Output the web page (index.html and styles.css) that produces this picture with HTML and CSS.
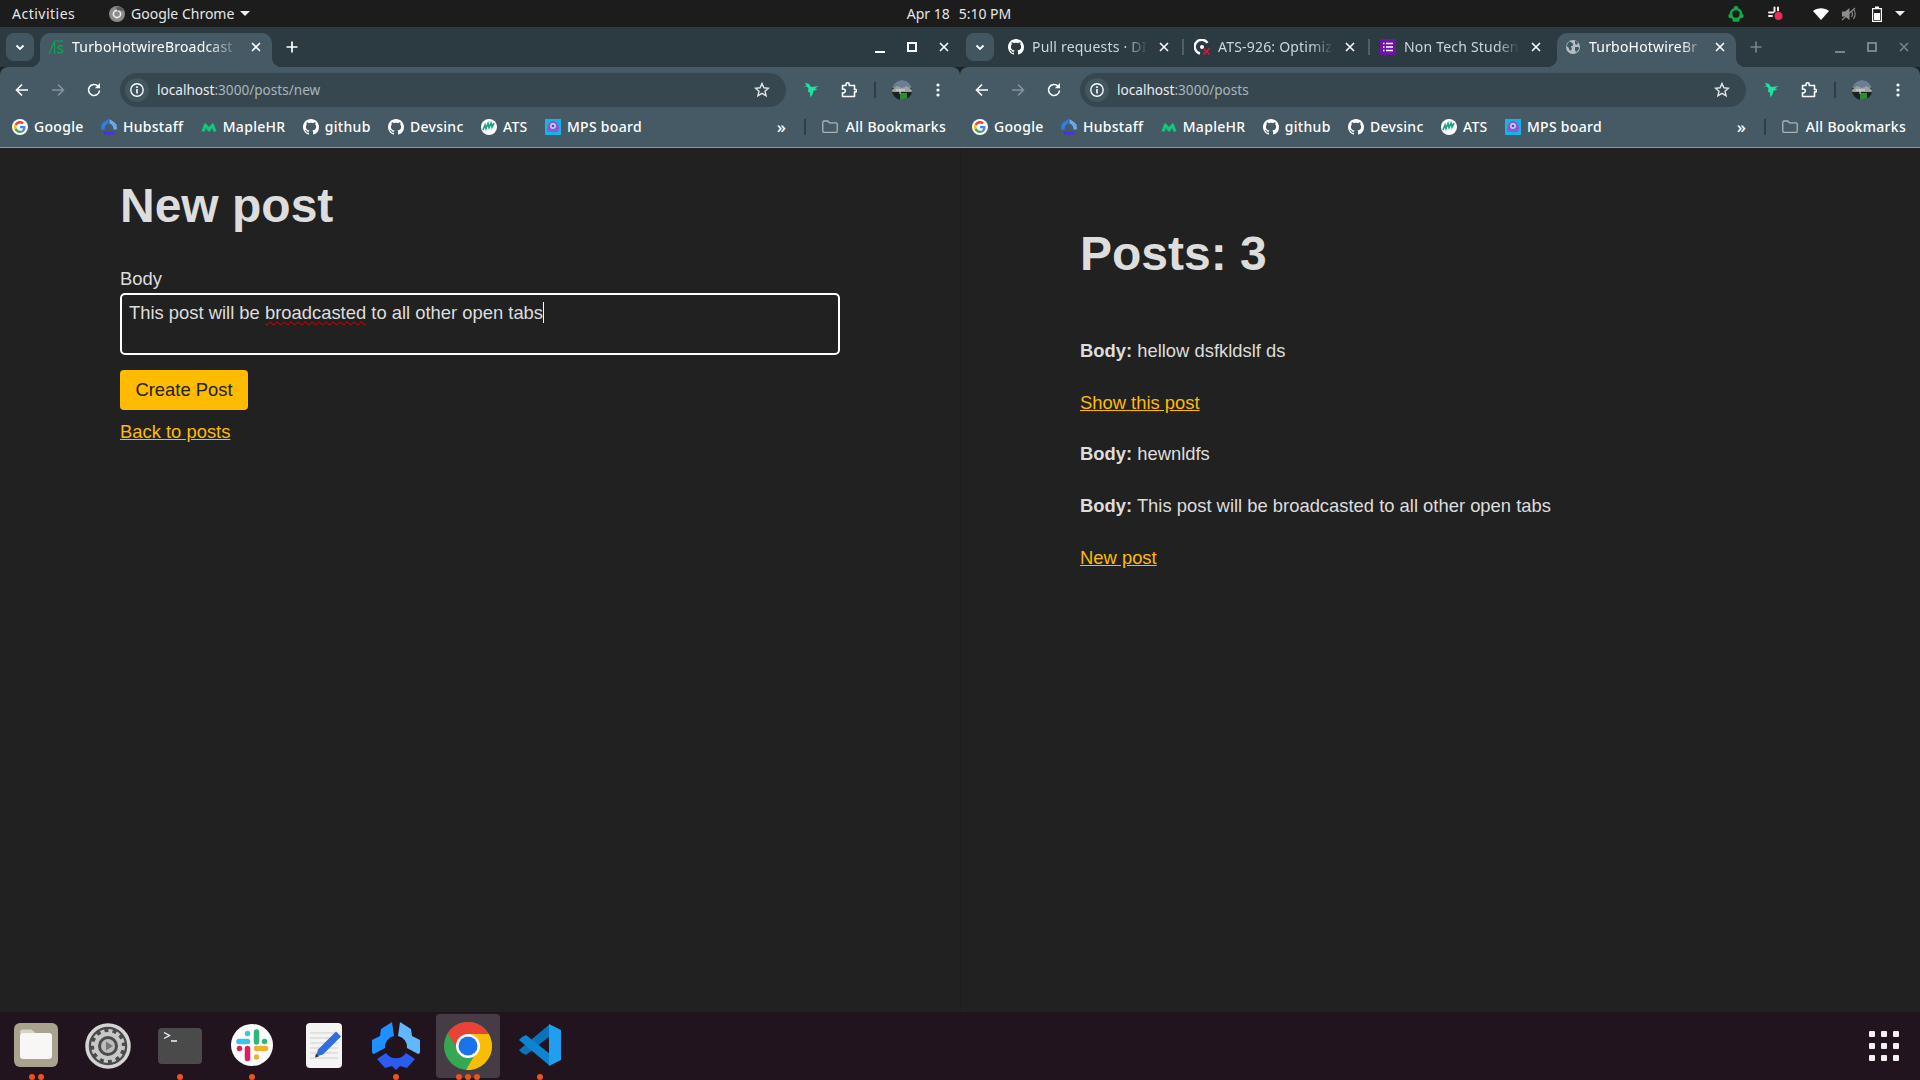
FILE: index.html
```html
<!DOCTYPE html>
<html lang="en">
<head>
<meta charset="utf-8">
<title>TurboHotwireBroadcast</title>
<link rel="stylesheet" href="styles.css">
</head>
<body>
<svg class="sprite" aria-hidden="true">
  <defs>
    <symbol id="gh" viewBox="0 0 16 16"><path fill="#fff" d="M8 0C3.58 0 0 3.58 0 8c0 3.54 2.29 6.53 5.47 7.59.4.07.55-.17.55-.38 0-.19-.01-.82-.01-1.49-2.01.37-2.53-.49-2.69-.94-.09-.23-.48-.94-.82-1.13-.28-.15-.68-.52-.01-.53.63-.01 1.08.58 1.23.82.72 1.21 1.87.87 2.33.66.07-.52.28-.87.51-1.07-1.78-.2-3.64-.89-3.64-3.95 0-.87.31-1.59.82-2.15-.08-.2-.36-1.02.08-2.12 0 0 .67-.21 2.2.82.64-.18 1.32-.27 2-.27.68 0 1.36.09 2 .27 1.53-1.04 2.2-.82 2.2-.82.44 1.1.16 1.92.08 2.12.51.56.82 1.27.82 2.15 0 3.07-1.87 3.75-3.65 3.95.29.25.54.73.54 1.48 0 1.07-.01 1.93-.01 2.2 0 .21.15.46.55.38A8.013 8.013 0 0016 8c0-4.42-3.58-8-8-8z"/></symbol>
    <symbol id="google" viewBox="0 0 48 48"><circle cx="24" cy="24" r="24" fill="#fff"/><g transform="translate(6 6) scale(.75)"><path fill="#EA4335" d="M24 9.5c3.5 0 6.7 1.2 9.2 3.6l6.9-6.9C35.9 2.4 30.5 0 24 0 14.6 0 6.5 5.4 2.6 13.2l8 6.2C12.4 13.7 17.7 9.5 24 9.5z"/><path fill="#4285F4" d="M46.1 24.5c0-1.6-.1-3.1-.4-4.5H24v9h12.4c-.5 2.9-2.2 5.4-4.6 7l7.3 5.7c4.3-4 7-9.9 7-17.2z"/><path fill="#FBBC05" d="M10.5 28.6c-.5-1.4-.8-3-.8-4.6s.3-3.2.8-4.6l-8-6.2C.9 16.5 0 20.1 0 24s.9 7.5 2.6 10.8l7.9-6.2z"/><path fill="#34A853" d="M24 48c6.5 0 11.9-2.1 15.9-5.8l-7.3-5.7c-2.2 1.5-5 2.3-8.6 2.3-6.3 0-11.6-4.2-13.5-9.9l-8 6.2C6.5 42.6 14.6 48 24 48z"/></g></symbol>
    <symbol id="hubstaff" viewBox="0 0 16 16"><path fill="#2f7de8" d="M7.500 0 3 3 .5 5.500 0 10.500h3.500C3.500 7 5 5 7.500 4.500z"/><path fill="#6aa8f2" d="M8.500 0 13 3l2.500 2.500.5 5h-3.500C12.500 7 11 5 8.500 4.500z"/><path fill="#4a2ff0" d="M1.500 12.500h13L12 15.500l-2-.5-2 1-2-1-2 .5z"/></symbol>
    <symbol id="maple" viewBox="0 0 16 16"><path fill="#12c87e" d="M.5 12.500 3 5.500c.4-1 1.600-1.200 2.300-.4L8 8l2.700-2.900c.7-.8 1.900-.6 2.300.4l2.500 7h-3.200L11 9l-2 3.500H7L5 9l-1.300 3.500z"/></symbol>
    <symbol id="ats" viewBox="0 0 16 16"><circle cx="8" cy="8" r="8" fill="#fff"/><path fill="none" stroke="#17a589" stroke-width="1.700" d="M2 11l2-5 1 3.500 2-5 1 4 2-4.500 1 4 2-4"/></symbol>
    <symbol id="mps" viewBox="0 0 16 16"><rect width="16" height="16" fill="#12b5e5"/><path fill="#8e56d8" d="M2 9.500C2 5 4.500 2 8 2s6 3 6 7.500c0 2-1 3.500-2.500 3.500h-7C3 13 2 11.500 2 9.500z"/><circle cx="8" cy="7" r="3" fill="#b7d5f5"/><circle cx="8" cy="7" r="1.300" fill="#6a3fc0"/></symbol>
    <symbol id="folder" viewBox="0 0 16 16"><path fill="none" stroke="#a9b3b8" stroke-width="1.300" d="M.8 3.200c0-.7.5-1.200 1.200-1.200h3.700l1.600 1.800H14c.7 0 1.200.5 1.200 1.200v7.200c0 .7-.5 1.200-1.200 1.200H2c-.7 0-1.200-.5-1.200-1.200z"/></symbol>
    <symbol id="close" viewBox="0 0 16 16"><path fill="none" stroke="currentColor" stroke-width="1.600" d="M4 4l8 8M12 4l-8 8"/></symbol>
    <symbol id="chev" viewBox="0 0 16 16"><path fill="none" stroke="#fff" stroke-width="1.800" d="M4.500 6.500 8 10l3.500-3.500"/></symbol>
    <symbol id="plus" viewBox="0 0 16 16"><path fill="none" stroke="currentColor" stroke-width="1.700" d="M8 2.500v11M2.500 8h11"/></symbol>
    <symbol id="back" viewBox="0 0 16 16"><path fill="none" stroke="currentColor" stroke-width="1.600" d="M14 8H2.500M8 2.500 2.500 8 8 13.500"/></symbol>
    <symbol id="fwd" viewBox="0 0 16 16"><path fill="none" stroke="currentColor" stroke-width="1.600" d="M2 8h11.500M8 2.500 13.500 8 8 13.500"/></symbol>
    <symbol id="reload" viewBox="0 0 16 16"><path fill="none" stroke="#fff" stroke-width="1.600" d="M13.500 8.500A5.500 5.500 0 1 1 12 4.200"/><path fill="#fff" d="M14 1v5.200H8.800z"/></symbol>
    <symbol id="info" viewBox="0 0 16 16"><circle cx="8" cy="8" r="6.200" fill="none" stroke="#fff" stroke-width="1.400"/><path fill="#fff" d="M7.200 7h1.600v4.500H7.200zM7.200 4.300h1.600v1.600H7.200z"/></symbol>
    <symbol id="star" viewBox="0 0 16 16"><path fill="none" stroke="#dfe5e8" stroke-width="1.400" d="M8 1.500l1.900 4.300 4.600.4-3.500 3 1.100 4.600L8 11.400l-4.100 2.400L5 9.200l-3.500-3 4.600-.4z"/></symbol>
    <symbol id="ext" viewBox="0 0 16 16"><path fill="#17e7a4" d="M2 .5 6 2l1.500 2.500 1.500.5L15.500 4l-3.500 2.500L14.500 7.500l-4 1.200-.8 3.500L7 15.500 7.200 11 5 9.500 5.500 6 3.500 4.500 .5 4.500 3.500 3.500z"/></symbol>
    <symbol id="puzzle" viewBox="0 0 16 16"><path fill="none" stroke="#fff" stroke-width="1.600" stroke-linejoin="round" d="M1.500 3.500H5V2.300C5 1 6 .8 6.600.8S8.200 1 8.200 2.300v1.200h5.300v4h1.200c.6 0 .8.600.8 1.200s-.2 1.200-.8 1.200h-1.200v4.600H1.500v-3.800c2 .3 2.800-.5 2.800-1.900S3.500 6.800 1.500 7.100z"/></symbol>
    <symbol id="avatar" viewBox="0 0 20 20"><clipPath id="avclip"><circle cx="10" cy="10" r="10"/></clipPath><g clip-path="url(#avclip)"><rect width="20" height="20" fill="#2a3232"/><rect width="20" height="8" fill="#6d7d95"/><path fill="#9aa39a" d="M0 10 5 6l5 2 5-2 5 4v2H0z"/><path fill="#1b2120" d="M0 12h20v8H0z"/><rect x="8" y="13" width="7" height="7" fill="#2e8a3a"/><path stroke="#ddd" stroke-width="1" d="M4 10h9M8 10v4"/></g></symbol>
    <symbol id="dots" viewBox="0 0 16 16"><circle cx="8" cy="3" r="1.600" fill="#fff"/><circle cx="8" cy="8" r="1.600" fill="#fff"/><circle cx="8" cy="13" r="1.600" fill="#fff"/></symbol>
    <symbol id="globe" viewBox="0 0 16 16"><circle cx="8" cy="8" r="7" fill="#b4bec3"/><path fill="#42565f" d="M4 2.500l3 1 1.500 2.500L6 7.500 7 10 5 12 3.500 8.500 1.500 7zM10 1.500l3 2L12 6l-2-1zM10 8l3.500 0 .5 2-3 3.500-1-3z"/></symbol>
    <symbol id="rs" viewBox="0 0 16 16"><path fill="none" stroke="#12a150" stroke-width="1.200" d="M6.500 2H15M6.500 2 1 15M6.500 2v13"/><path fill="none" stroke="#12a150" stroke-width="1.400" d="M14.500 7.500c-1-1-4.500-1.300-4.500.8 0 2.400 4.800 1.400 4.800 3.800 0 2.300-3.800 2.200-5.300 1"/></symbol>
    <symbol id="ci" viewBox="0 0 16 16"><path fill="none" stroke="#fff" stroke-width="2.400" d="M13.500 3.800A7 7 0 1 0 6 14.500"/><circle cx="8" cy="8" r="2" fill="#fff"/><path fill="none" stroke="#e0143c" stroke-width="1.500" d="M9.500 9.500l6 6M15.500 9.500l-6 6"/></symbol>
    <symbol id="forms" viewBox="0 0 16 16"><rect width="16" height="16" rx="1" fill="#7014a8"/><path stroke="#fff" stroke-width="1.500" d="M3 4.500h1.500M6 4.500h7M3 8h1.500M6 8h7M3 11.500h1.500M6 11.500h7"/></symbol>
  </defs>
</svg>

<div class="desktop">
  <header class="topbar">
    <div class="top-left">
      <span class="activities">Activities</span>
      <span class="appmenu">
        <svg class="ic-16" viewBox="0 0 16 16"><circle cx="8" cy="8" r="8" fill="#8b8b8b"/><circle cx="8" cy="8" r="3.600" fill="none" stroke="#ededed" stroke-width="1.600"/><path fill="#5d5d5d" d="M8 4.400h7l-.6-1.600L11 .8 7 1.500z"/></svg>
        <span>Google Chrome</span>
        <i class="caret"></i>
      </span>
    </div>
    <div class="clock"><span>Apr 18</span><span>5:10 PM</span></div>
    <div class="tray">
      <svg class="ic-16 t-green" viewBox="0 0 16 16"><circle cx="8" cy="8" r="5" fill="none" stroke="#12a84a" stroke-width="2.600"/><g fill="#12a84a"><circle cx="8" cy="2" r="2.200"/><circle cx="2.500" cy="10" r="2.200"/><circle cx="13.500" cy="10" r="2.200"/><rect x="4.500" y="12.800" width="7" height="3" rx="1.400"/></g></svg>
      <svg class="ic-16 t-slack" viewBox="0 0 16 16"><path stroke="#eee" stroke-width="2" stroke-linecap="round" d="M1 6.500h4M6.500 1.500v4M1 10h3M10 1.500v3"/><circle cx="10.500" cy="10" r="4" fill="#f2295f"/></svg>
      <svg class="ic-16 t-wifi" viewBox="0 0 16 16"><path fill="#fff" d="M8 14 0 5c4.500-3.800 11.500-3.800 16 0z"/></svg>
      <svg class="ic-16 t-mute" viewBox="0 0 16 16"><path fill="#8d8d8d" d="M1 5.500h3L8.500 2v12L4 10.500H1z"/><path fill="none" stroke="#8d8d8d" stroke-width="1.100" d="M10.500 5c1.200 1.800 1.200 4.200 0 6M12.500 3c2 3 2 7 0 10M1 14 14 2"/></svg>
      <svg class="ic-16 t-batt" viewBox="0 0 16 16"><path fill="none" stroke="#fff" stroke-width="1.200" d="M3.600 2.600h8.800v12.800H3.600z"/><path fill="#fff" d="M6 .5h4v2H6zM5 7h6v7H5z"/></svg>
      <i class="caret t-caret"></i>
    </div>
  </header>

  <main class="windows">
    <section class="window">
      <div class="tabstrip">
        <button class="tab-list"><svg class="ic-16"><use href="#chev"/></svg></button>
        <div class="tab tab-active tab-wide">
          <svg class="ic-16"><use href="#rs"/></svg>
          <span class="tab-title">TurboHotwireBroadcast</span>
          <svg class="tab-x"><use href="#close"/></svg>
        </div>
        <button class="newtab"><svg class="ic-16"><use href="#plus"/></svg></button>
        <div class="winctl">
          <span class="ctl"><i class="ctl-min"></i></span>
          <span class="ctl"><i class="ctl-max"></i></span>
          <span class="ctl"><svg class="ic-16"><use href="#close"/></svg></span>
        </div>
      </div>
      <div class="toolbar">
        <span class="nav"><svg class="ic-16"><use href="#back"/></svg></span>
        <span class="nav nav-off"><svg class="ic-16"><use href="#fwd"/></svg></span>
        <span class="nav"><svg class="ic-16"><use href="#reload"/></svg></span>
        <div class="omnibox">
          <span class="chip"><svg class="ic-16"><use href="#info"/></svg></span>
          <span class="url">localhost<span class="url-dim">:3000/posts/new</span></span>
          <svg class="ic-16 star"><use href="#star"/></svg>
        </div>
        <div class="tools">
          <svg class="ic-16 tool-ext"><use href="#ext"/></svg>
          <svg class="ic-16 tool-puzzle"><use href="#puzzle"/></svg>
          <i class="vsep tool-sep"></i>
          <svg class="tool-avatar"><use href="#avatar"/></svg>
          <svg class="ic-16 tool-dots"><use href="#dots"/></svg>
        </div>
      </div>
      <nav class="bookmarks">
        <a class="bm"><svg class="ic-16"><use href="#google"/></svg>Google</a>
        <a class="bm"><svg class="ic-16"><use href="#hubstaff"/></svg>Hubstaff</a>
        <a class="bm"><svg class="ic-16"><use href="#maple"/></svg>MapleHR</a>
        <a class="bm"><svg class="ic-16"><use href="#gh"/></svg>github</a>
        <a class="bm"><svg class="ic-16"><use href="#gh"/></svg>Devsinc</a>
        <a class="bm"><svg class="ic-16"><use href="#ats"/></svg>ATS</a>
        <a class="bm"><svg class="ic-16"><use href="#mps"/></svg>MPS board</a>
        <span class="more">»</span>
        <i class="vsep"></i>
        <a class="bm bm-all"><svg class="ic-16"><use href="#folder"/></svg>All Bookmarks</a>
      </nav>
      <div class="page page-new">
        <h1>New post</h1>
        <form class="form">
          <label class="label">Body</label>
          <div class="textarea">This post will be <span class="misspelt">broadcasted</span> to all other open tabs<i class="text-caret"></i></div>
          <span class="btn">Create Post</span>
        </form>
        <a class="link back-link" href="#">Back to posts</a>
      </div>
    </section>

    <section class="window window-right">
      <div class="tabstrip">
        <button class="tab-list"><svg class="ic-16"><use href="#chev"/></svg></button>
        <div class="tab tab-sep">
          <svg class="ic-16"><use href="#gh"/></svg>
          <span class="tab-title">Pull requests · DI</span>
          <svg class="tab-x"><use href="#close"/></svg>
        </div>
        <div class="tab tab-sep">
          <svg class="ic-16"><use href="#ci"/></svg>
          <span class="tab-title">ATS-926: Optimiz</span>
          <svg class="tab-x"><use href="#close"/></svg>
        </div>
        <div class="tab">
          <svg class="ic-16"><use href="#forms"/></svg>
          <span class="tab-title">Non Tech Studen</span>
          <svg class="tab-x"><use href="#close"/></svg>
        </div>
        <div class="tab tab-active tab-last">
          <svg class="ic-16"><use href="#globe"/></svg>
          <span class="tab-title">TurboHotwireBr</span>
          <svg class="tab-x"><use href="#close"/></svg>
        </div>
        <button class="newtab newtab-dim"><svg class="ic-16"><use href="#plus"/></svg></button>
        <div class="winctl winctl-dim">
          <span class="ctl"><i class="ctl-min"></i></span>
          <span class="ctl"><i class="ctl-max"></i></span>
          <span class="ctl"><svg class="ic-16"><use href="#close"/></svg></span>
        </div>
      </div>
      <div class="toolbar">
        <span class="nav"><svg class="ic-16"><use href="#back"/></svg></span>
        <span class="nav nav-off"><svg class="ic-16"><use href="#fwd"/></svg></span>
        <span class="nav"><svg class="ic-16"><use href="#reload"/></svg></span>
        <div class="omnibox">
          <span class="chip"><svg class="ic-16"><use href="#info"/></svg></span>
          <span class="url">localhost<span class="url-dim">:3000/posts</span></span>
          <svg class="ic-16 star"><use href="#star"/></svg>
        </div>
        <div class="tools">
          <svg class="ic-16 tool-ext"><use href="#ext"/></svg>
          <svg class="ic-16 tool-puzzle"><use href="#puzzle"/></svg>
          <i class="vsep tool-sep"></i>
          <svg class="tool-avatar"><use href="#avatar"/></svg>
          <svg class="ic-16 tool-dots"><use href="#dots"/></svg>
        </div>
      </div>
      <nav class="bookmarks">
        <a class="bm"><svg class="ic-16"><use href="#google"/></svg>Google</a>
        <a class="bm"><svg class="ic-16"><use href="#hubstaff"/></svg>Hubstaff</a>
        <a class="bm"><svg class="ic-16"><use href="#maple"/></svg>MapleHR</a>
        <a class="bm"><svg class="ic-16"><use href="#gh"/></svg>github</a>
        <a class="bm"><svg class="ic-16"><use href="#gh"/></svg>Devsinc</a>
        <a class="bm"><svg class="ic-16"><use href="#ats"/></svg>ATS</a>
        <a class="bm"><svg class="ic-16"><use href="#mps"/></svg>MPS board</a>
        <span class="more">»</span>
        <i class="vsep"></i>
        <a class="bm bm-all"><svg class="ic-16"><use href="#folder"/></svg>All Bookmarks</a>
      </nav>
      <div class="page page-list">
        <h1>Posts: 3</h1>
        <div class="posts">
          <p><strong>Body:</strong> hellow dsfkldslf ds</p>
          <p><a class="link" href="#">Show this post</a></p>
          <p><strong>Body:</strong> hewnldfs</p>
          <p><strong>Body:</strong> This post will be broadcasted to all other open tabs</p>
          <p><a class="link" href="#">New post</a></p>
        </div>
      </div>
    </section>
  </main>

  <footer class="dock">
    <div class="apps">
      <div class="app">
        <svg class="appicon icon-files" viewBox="0 0 48 48"><rect x="2" y="1" width="44" height="44" rx="6" fill="#a8a28f"/><path fill="#d6d2c6" d="M8 10c0-1.500 1-2.500 2.500-2.500h9L24 11.500H8z"/><rect x="8" y="11" width="32" height="26" rx="3" fill="#f8f7f5"/></svg>
        <div class="run"><i></i><i></i></div>
      </div>
      <div class="app">
        <svg class="appicon" viewBox="0 0 48 48"><circle cx="24" cy="24" r="21" fill="#4b4b4b" stroke="#d4d4d4" stroke-width="3.500"/><circle cx="24" cy="24" r="12" fill="none" stroke="#c8c8c8" stroke-width="4"/><circle cx="24" cy="24" r="15" fill="none" stroke="#c8c8c8" stroke-width="4" stroke-dasharray="4 3.850"/><circle cx="24" cy="24" r="7" fill="#bdbdbd"/><path fill="#777" d="M22 19.500l7 4.500-7 4.500z"/></svg>
      </div>
      <div class="app">
        <svg class="appicon" viewBox="0 0 48 48"><rect x="2" y="6" width="44" height="36" rx="4" fill="#4a4a4a"/><path fill="none" stroke="#f2f2f2" stroke-width="1.400" d="M8 10.500l5.500 3L8 16.500M15 19h6"/></svg>
        <div class="run"><i></i></div>
      </div>
      <div class="app">
        <svg class="appicon" viewBox="0 0 48 48"><circle cx="24" cy="23" r="21" fill="#fff"/><g fill="none" stroke-width="5.500" stroke-linecap="round"><path stroke="#36c5f0" d="M11 19.500h8.500"/><path stroke="#36c5f0" d="M19.500 11.500v0"/><path stroke="#2eb67d" d="M28.500 10v10"/><path stroke="#2eb67d" d="M36.500 19.500v0"/><path stroke="#e01e5a" d="M19.500 26.500v10"/><path stroke="#e01e5a" d="M11.500 26.500v0"/><path stroke="#ecb22e" d="M28.500 26.500h9"/><path stroke="#ecb22e" d="M28.500 35v0"/></g></svg>
        <div class="run"><i></i></div>
      </div>
      <div class="app">
        <svg class="appicon" viewBox="0 0 48 48"><rect x="6" y="1" width="36" height="45" rx="4" fill="#f4f4f4"/><path stroke="#cfcfcf" stroke-width="1" d="M10 11h28M10 16h28M10 21h28M10 26h28M10 31h28M10 36h28"/><path fill="#2f6fdb" d="M36 9.500l5 5-18 18-7 2 2-7z"/><path fill="#333" d="M15 35.500l1-4 3 3z"/></svg>
      </div>
      <div class="app">
        <svg class="appicon" viewBox="0 0 48 48"><path fill="#1e90ff" d="M20 0 22 14A11 11 0 0 0 13 26L2 32Q0 32 0 30L0 18 8 14 9 7z"/><path fill="#62b8ff" d="M28 0 26 14A11 11 0 0 1 35 26L46 32Q48 32 48 30L48 18 40 14 39 7z"/><path fill="#2a5cf0" d="M5 37 14 31A12 12 0 0 0 34 31L43 37 35 46 28 44 24 48 20 44 13 46z"/></svg>
        <div class="run"><i></i></div>
      </div>
      <div class="app app-focus">
        <svg class="appicon" viewBox="0 0 48 48"><circle cx="24" cy="24" r="24" fill="#34a853"/><path fill="#ea4335" d="M24 0C15.500 0 8 4.500 3.700 11.200L14 28 24 12h20.700C40.500 4.800 32.800 0 24 0z"/><path fill="#fbbc04" d="M44.700 12H24l10 15.500L22 48h2c13.300 0 24-10.700 24-24 0-4.400-1.200-8.500-3.300-12z"/><circle cx="24" cy="24" r="12" fill="#fff"/><circle cx="24" cy="24" r="9.500" fill="#1a73e8"/></svg>
        <div class="run"><i></i><i></i><i></i></div>
      </div>
      <div class="app">
        <svg class="appicon" viewBox="0 0 48 48"><path fill="#0a74b8" d="M34 2V14L10 33 6 31 3 28z"/><path fill="#0d84cf" d="M3 18 6 15 10 13 34 32V44z"/><path fill="#1f9fee" d="M33 2 45 8V38L33 44z"/></svg>
        <div class="run"><i></i></div>
      </div>
    </div>
    <div class="grid-btn">
      <i></i><i></i><i></i><i></i><i></i><i></i><i></i><i></i><i></i>
    </div>
  </footer>
</div>
</body>
</html>
```

FILE: styles.css
```css
* { box-sizing: border-box; }
html, body { margin: 0; height: 100%; }
body { font-family: "Noto Sans", sans-serif; background: #212121; color: #fff; overflow: hidden; }
.sprite { position: absolute; width: 0; height: 0; }
.ic-16 { width: 16px; height: 16px; flex: none; display: block; }
.desktop { width: 1920px; height: 1080px; display: flex; flex-direction: column; }

/* top bar */
.topbar { height: 27px; background: #1c1c1c; display: grid; grid-template-columns: 1fr auto 1fr; align-items: center; font-size: 14px; color: #e6e6e6; flex: none; }
.top-left { display: flex; align-items: center; padding-left: 12px; }
.activities { width: 97px; letter-spacing: .5px; }
.appmenu { display: flex; align-items: center; gap: 6px; }
.caret { width: 0; height: 0; border-left: 5px solid transparent; border-right: 5px solid transparent; border-top: 5px solid #eee; display: block; }
.clock { display: flex; gap: 9px; margin-left: -2px; }
.tray { display: flex; align-items: center; justify-content: flex-end; padding-right: 15px; }
.t-green { margin-right: 24px; }
.t-slack { margin-right: 29px; }
.t-wifi { margin-right: 12px; }
.t-mute { margin-right: 12px; }
.t-batt { margin-right: 10px; }

/* windows */
.windows { flex: 1; display: flex; min-height: 0; }
.window { width: 960px; display: flex; flex-direction: column; }
.window-right .page { border-left: 1px solid #1d1d1d; padding-left: 119px; }

.tabstrip { height: 40px; flex: none; background: #2c3a41; display: flex; align-items: flex-start; padding: 6px 0 0 6px; gap: 6px; }
.tab-list { width: 28px; height: 28px; border: 0; padding: 0; background: #42565f; border-radius: 8px; display: flex; align-items: center; justify-content: center; }
.tab { width: 180px; height: 34px; display: flex; align-items: center; gap: 8px; padding: 0 8px 6px; color: #cdd6da; position: relative; font-size: 14px; letter-spacing: .2px; }
.tab-wide { width: 232px; }
.tab-last { width: 179px; margin-left: -1px; }
.tab-active { background: #455a64; border-radius: 10px 10px 0 0; color: #fff; }
.tab-active::before, .tab-active::after { content: ""; position: absolute; bottom: 0; width: 10px; height: 10px; }
.tab-active::before { left: -10px; background: radial-gradient(circle at 0 0, transparent 10px, #455a64 10.500px); }
.tab-active::after { right: -10px; background: radial-gradient(circle at 100% 0, transparent 10px, #455a64 10.500px); }
.tab-sep::after { content: ""; position: absolute; right: -4px; top: 6px; width: 2px; height: 16px; background: #4d6069; }
.tab-title { flex: 1; min-width: 0; white-space: nowrap; overflow: hidden; margin-bottom: 2px; -webkit-mask-image: linear-gradient(to right, #000 80%, transparent 100%); mask-image: linear-gradient(to right, #000 80%, transparent 100%); }
.tab-x { width: 16px; height: 16px; flex: none; color: #fff; }
.newtab { width: 28px; height: 28px; margin-left: 0; border: 0; padding: 0; background: none; color: #fff; display: flex; align-items: center; justify-content: center; }
.newtab-dim { color: #74858d; }
.winctl { margin-left: auto; display: flex; height: 28px; color: #fff; }
.winctl-dim { color: #74858d; }
.ctl { width: 32px; height: 28px; display: flex; align-items: center; justify-content: center; }
.ctl-min { width: 10px; height: 2px; background: currentColor; margin-top: 10px; }
.ctl-max { width: 10px; height: 10px; border: 2px solid currentColor; }

.toolbar { height: 40px; flex: none; background: #455a64; display: flex; align-items: flex-start; padding: 6px 0 0 8px; gap: 8px; border-radius: 8px 8px 0 0; position: relative; }
.nav { width: 28px; height: 34px; display: flex; align-items: center; justify-content: center; color: #fff; flex: none; }
.nav-off { color: #84949c; }
.omnibox { width: 666px; height: 34px; margin-left: 4px; background: #37474f; border-radius: 17px; display: flex; align-items: center; padding: 0 14px 0 5px; flex: none; }
.chip { width: 24px; height: 24px; border-radius: 50%; background: #42565f; display: flex; align-items: center; justify-content: center; flex: none; }
.url { margin-left: 8px; margin-bottom: 2px; flex: 1; font-size: 13.600px; color: #e9edef; white-space: nowrap; }
.url-dim { color: #a9b5bb; }
.star { margin-right: 2px; }
.tools { display: flex; align-items: center; height: 34px; flex: 1; padding-left: 11px; margin-left: -8px; }
.tool-ext { margin-left: 6px; }
.tool-puzzle { margin-left: 22px; }
.tool-sep { margin-left: 17px; }
.tool-avatar { width: 20px; height: 20px; margin-left: 16px; flex: none; }
.tool-dots { margin-left: 18px; }
.vsep { width: 2px; height: 16px; background: #2f3e45; display: block; flex: none; }

.bookmarks { height: 41px; flex: none; background: #455a64; border-bottom: 1px solid #8a979d; display: flex; align-items: center; padding: 0 14px 1px 12px; gap: 17.300px; font-size: 14px; font-weight: 500; letter-spacing: .3px; }
.bm { display: flex; align-items: center; gap: 6px; color: #fff; white-space: nowrap; }
.bm-all { gap: 8px; margin-left: -1px; }
.more { margin-left: auto; font-size: 17px; line-height: 1; color: #fff; }

/* page content */
.page { flex: 1; background: #212121; color: #ddd; font-family: "Liberation Sans", Arial, sans-serif; font-size: 18.400px; width: 100%; padding: 0 120px; letter-spacing: 0; }
.page h1 { margin: 0; font-size: 48px; line-height: 56px; font-weight: 700; }
.page-new { padding-top: 30px; }
.form { margin-top: 35px; display: flex; flex-direction: column; align-items: flex-start; }
.label { line-height: 20px; margin-bottom: 4px; }
.textarea { width: 720px; height: 62px; border: 2px solid #fff; border-radius: 5px; padding: 7px 7px 8px; line-height: 21px; color: #ddd; }
.misspelt { text-decoration: underline wavy #e00000 1px; text-underline-offset: 2px; }
.text-caret { display: inline-block; width: 1px; height: 21px; background: #fff; vertical-align: top; }
.btn { margin-top: 15px; width: 128px; height: 40px; background: #ffbb00; color: #222; border-radius: 4px; display: flex; align-items: center; justify-content: center; }
.link { color: #ffbb00; text-decoration: underline; }
.back-link { display: block; margin-top: 11px; line-height: 21px; }
.page-list { padding-top: 78px; }
.posts { margin-top: 55px; }
.posts p { margin: 0 0 24.700px; line-height: 27px; }

/* dock */
.dock { height: 68px; flex: none; background: #21141f; display: flex; align-items: center; justify-content: space-between; position: relative; }
.apps { display: flex; height: 100%; }
.app { width: 72px; height: 100%; display: flex; align-items: center; justify-content: center; position: relative; }
.app-focus::before { content: ""; position: absolute; left: 4px; top: 2px; width: 64px; height: 64px; background: #463c45; border-radius: 4px; }
.appicon { width: 48px; height: 48px; position: relative; display: block; }
.run { position: absolute; bottom: 0; left: 0; right: 0; display: flex; justify-content: center; gap: 3px; }
.run i { width: 6px; height: 6px; border-radius: 50%; background: #e95420; display: block; }
.grid-btn { display: grid; grid-template-columns: repeat(3, 6px); gap: 6px; margin-right: 21px; }
.grid-btn i { width: 6px; height: 6px; background: #f2f0f0; border-radius: 1px; display: block; }
```
